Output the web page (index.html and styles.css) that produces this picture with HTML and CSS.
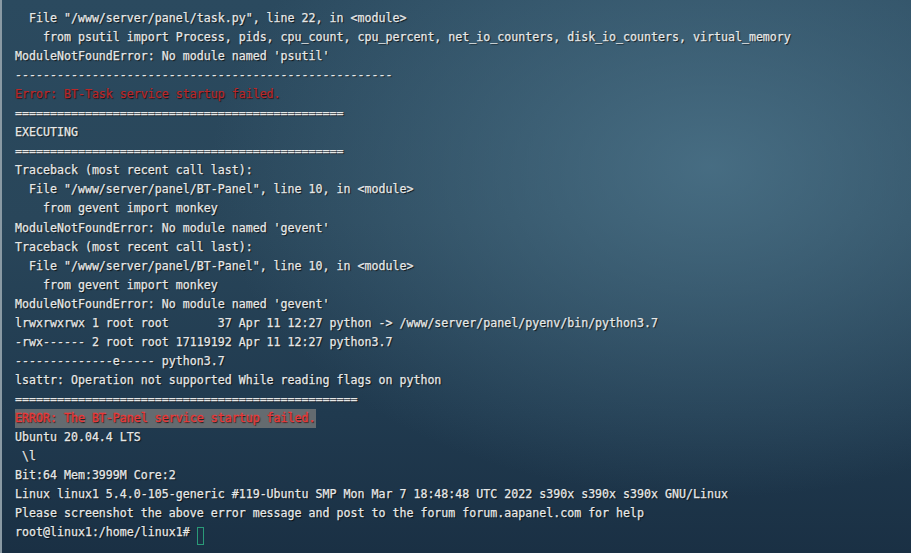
FILE: index.html
```html
<!DOCTYPE html>
<html>
<head>
<meta charset="utf-8">
<link rel="stylesheet" href="styles.css">
</head>
<body>
<div class="term">
<pre class="out">  File "/www/server/panel/task.py", line 22, in &lt;module&gt;
    from psutil import Process, pids, cpu_count, cpu_percent, net_io_counters, disk_io_counters, virtual_memory
ModuleNotFoundError: No module named 'psutil'
------------------------------------------------------
<span class="err">Error: BT-Task service startup failed.</span>
===============================================
EXECUTING
===============================================
Traceback (most recent call last):
  File "/www/server/panel/BT-Panel", line 10, in &lt;module&gt;
    from gevent import monkey
ModuleNotFoundError: No module named 'gevent'
Traceback (most recent call last):
  File "/www/server/panel/BT-Panel", line 10, in &lt;module&gt;
    from gevent import monkey
ModuleNotFoundError: No module named 'gevent'
lrwxrwxrwx 1 root root       37 Apr 11 12:27 python -&gt; /www/server/panel/pyenv/bin/python3.7
-rwx------ 2 root root 17119192 Apr 11 12:27 python3.7
--------------e----- python3.7
lsattr: Operation not supported While reading flags on python
=================================================
<span class="fatal">ERROR: The BT-Panel service startup failed.</span>
Ubuntu 20.04.4 LTS
 \l
Bit:64 Mem:3999M Core:2
Linux linux1 5.4.0-105-generic #119-Ubuntu SMP Mon Mar 7 18:48:48 UTC 2022 s390x s390x s390x GNU/Linux
Please screenshot the above error message and post to the forum forum.aapanel.com for help
root@linux1:/home/linux1# <span class="cursor"> </span></pre>
</div>
</body>
</html>
```
FILE: styles.css
```css
html, body {
  margin: 0;
  padding: 0;
  width: 911px;
  height: 553px;
  overflow: hidden;
}
.term {
  width: 911px;
  height: 553px;
  box-sizing: border-box;
  border-left: 2px solid #8a9aa4;
  padding: 9px 0 0 13px;
  background:
    radial-gradient(ellipse 55% 60% at 78% 30%, rgba(78, 118, 140, 0.8), rgba(78, 118, 140, 0) 100%),
    linear-gradient(180deg, #2b4a5f 0%, #29465a 40%, #203a4f 75%, #1a3044 100%);
}
.out {
  margin: 0;
  font-family: "DejaVu Sans Mono", monospace;
  font-size: 11.62px;
  line-height: 19.05px;
  color: #e6e8e8;
  -webkit-text-stroke: 0.25px #e6e8e8;
  text-shadow: 1px 1px 1px rgba(0, 0, 0, 0.8);
  white-space: pre;
}
.err {
  color: #b8282a;
  -webkit-text-stroke: 0.25px #b8282a;
}
.fatal {
  color: #e53a3a;
  -webkit-text-stroke: 0.4px #e53a3a;
  background: rgba(118, 120, 120, 0.8);
  padding: 2px 0 3px;
}
.cursor {
  display: inline-block;
  width: 5px;
  height: 16px;
  border: 1px solid #2a9a78;
  -webkit-text-stroke: 0;
  vertical-align: -5px;
}
```
